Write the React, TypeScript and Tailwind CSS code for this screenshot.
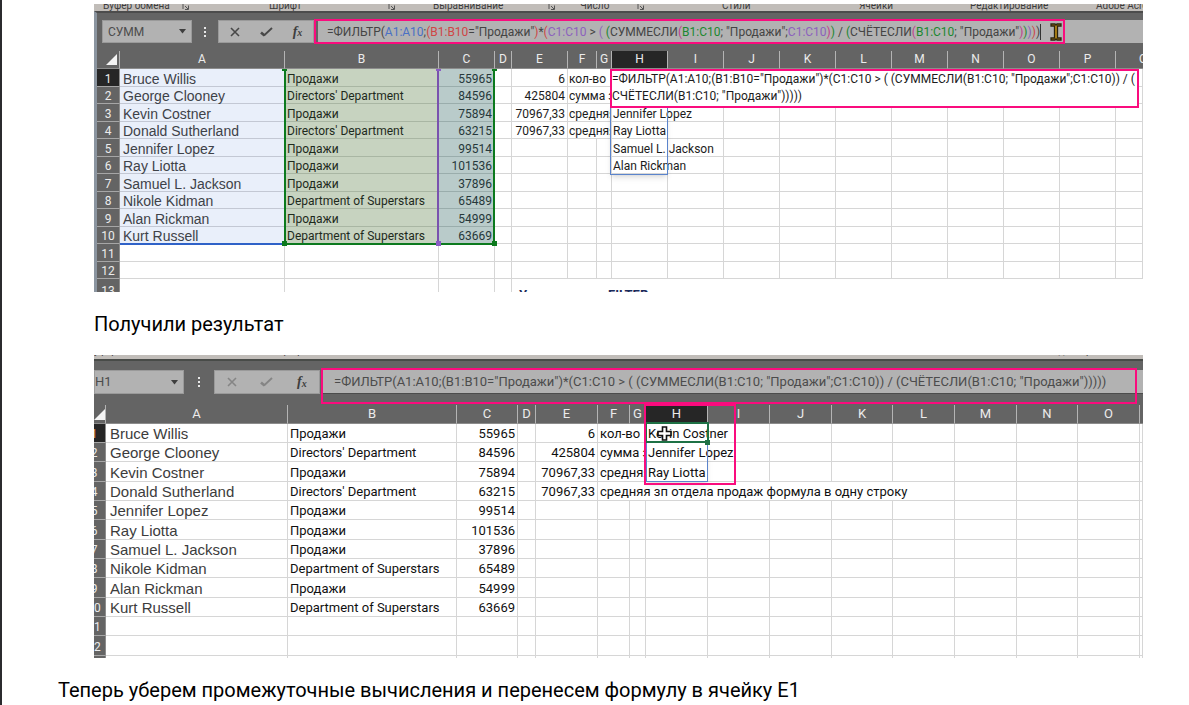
import React from "react";

const people: [string, string, string][] = [
  ["Bruce Willis", "Продажи", "55965"],
  ["George Clooney", "Directors' Department", "84596"],
  ["Kevin Costner", "Продажи", "75894"],
  ["Donald Sutherland", "Directors' Department", "63215"],
  ["Jennifer Lopez", "Продажи", "99514"],
  ["Ray Liotta", "Продажи", "101536"],
  ["Samuel L. Jackson", "Продажи", "37896"],
  ["Nikole Kidman", "Department of Superstars", "65489"],
  ["Alan Rickman", "Продажи", "54999"],
  ["Kurt Russell", "Department of Superstars", "63669"],
];

const totals: [string, string][] = [
  ["6", "кол-во"],
  ["425804", "сумма зп"],
  ["70967,33", "средняя зп"],
  ["70967,33", "средняя зп отдела продаж формула в одну строку"],
];

const formula =
  '=ФИЛЬТР(A1:A10;(B1:B10="Продажи")*(C1:C10 > ( (СУММЕСЛИ(B1:C10; "Продажи";C1:C10)) / (СЧЁТЕСЛИ(B1:C10; "Продажи")))))';
const cellFormula = formula.replace("/ (", "/ (\n");

const tokens: [string, string][] = [
  ["=ФИЛЬТР(", ""],
  ["A1:A10", "text-[#4a70c4]"],
  [";", ""],
  ["(B1:B10", "text-[#cf4646]"],
  ['="Продажи"', ""],
  [")", "text-[#cf4646]"],
  ["*", ""],
  ["(", "text-[#cf4646]"],
  ["C1:C10", "text-[#8c62bd]"],
  [" > ", ""],
  ["( ", "text-[#8c62bd]"],
  ["(", "text-[#1c8830]"],
  ["СУММЕСЛИ", ""],
  ["(", "text-[#c0408c]"],
  ["B1:C10", "text-[#1c8830]"],
  ['; "Продажи";', ""],
  ["C1:C10", "text-[#8c62bd]"],
  [")", "text-[#c0408c]"],
  [")", "text-[#1c8830]"],
  [" / ", ""],
  ["(", "text-[#1c8830]"],
  ["СЧЁТЕСЛИ", ""],
  ["(", "text-[#c0408c]"],
  ["B1:C10", "text-[#1c8830]"],
  ['; "Продажи"', ""],
  [")", "text-[#c0408c]"],
  [")", "text-[#1c8830]"],
  [")", "text-[#8c62bd]"],
  [")", "text-[#cf4646]"],
  [")", ""],
];

const grid = "border-r border-b border-[#d6d6d6] p-0";
const rowHead =
  "border-r border-b border-r-[#8c8c8c] border-b-[#a6a6a6] p-0 text-center font-normal text-[#ececec]";
const colHead = "border-r border-b border-r-[#b4b4b4] border-b-[#8c8c8c] p-0 text-center font-normal text-[#ececec]";

function Launcher() {
  return (
    <svg className="h-[7px] w-[8px]" viewBox="0 0 8 7" fill="none" stroke="#555">
      <path d="M1 0v5M3 2l3 3M3 5.500h3.500v-4" />
    </svg>
  );
}

function Dots() {
  return (
    <svg className="h-3 w-1" viewBox="0 0 4 12" fill="#e8e8e8">
      <path d="M1 1h2v2H1zM1 5h2v2H1zM1 9h2v2H1z" />
    </svg>
  );
}

function NameBox({ label, value, inputClass }: { label: string; value: string; inputClass: string }) {
  return (
    <div className="flex h-full w-[90px] shrink-0 items-center border border-[#9a9a9a] bg-[#b2b2b2]">
      <input
        aria-label={label}
        defaultValue={value}
        className={`min-w-0 flex-1 bg-transparent text-[#4c4c4c] outline-none ${inputClass}`}
      />
      <button aria-label="Список имён" className="flex h-full w-[18px] items-center justify-center">
        <svg className="h-[5px] w-[7px]" viewBox="0 0 7 5" fill="#3e3e3e">
          <path d="M0 0h7L3.500 4.500z" />
        </svg>
      </button>
    </div>
  );
}

function FormulaButtons({ muted }: { muted?: boolean }) {
  const tone = muted ? "#858585" : "#484848";
  return (
    <div className="flex h-full shrink-0 items-center border border-[#9a9a9a] bg-[#b2b2b2]">
      <button aria-label="Отмена" className="flex h-full w-[31px] items-center justify-center">
        <svg className="h-[10px] w-[10px]" viewBox="0 0 10 10" fill="none" stroke={tone} strokeWidth="1.600">
          <path d="M1 1l8 8M9 1L1 9" />
        </svg>
      </button>
      <button aria-label="Ввод" className="flex h-full w-8 items-center justify-center">
        <svg className="h-[10px] w-[13px]" viewBox="0 0 13 10" fill="none" stroke={tone}>
          <path d="M1 5.500l3.500 3" strokeWidth="2.600" />
          <path d="M4 8.500L12 1" strokeWidth="1.800" />
        </svg>
      </button>
      <button
        aria-label="Вставить функцию"
        className="flex h-full w-[31px] items-center justify-center font-['Liberation_Serif',serif] text-sm font-bold text-[#3e3e3e] italic"
      >
        f<span className="pt-1 text-[10px]">x</span>
      </button>
    </div>
  );
}

function ColumnHeads({ letters, active, className, children }: {
  letters: string;
  active: string;
  className: string;
  children: React.ReactNode;
}) {
  return (
    <thead>
      <tr className={`bg-[#646464] ${className}`}>
        <th className="border-r border-b border-r-[#b4b4b4] border-b-[#8c8c8c] p-0">
          <svg className="mr-[2px] ml-auto h-[11px] w-[11px]" viewBox="0 0 11 11" fill="#f4f4f4">
            <path d="M11 0v11H0z" />
          </svg>
        </th>
        {letters.split("").map((l) => (
          <th key={l} className={`${colHead} ${l === active ? "bg-[#262626]" : ""}`}>
            {l}
          </th>
        ))}
        {children}
      </tr>
    </thead>
  );
}

function Blank({ n }: { n: number }) {
  return (
    <>
      {Array.from({ length: n }, (_, i) => (
        <td key={i} className={grid} />
      ))}
    </>
  );
}

function EditingSheet() {
  const spill = ["", "", "Jennifer Lopez", "Ray Liotta", "Samuel L. Jackson", "Alan Rickman"];
  const row = "leading-[14px] odd:h-[18px] even:h-[17px] [&>*]:pt-[2px]";
  return (
    <section className="relative mr-[46px] ml-[92px] h-72 overflow-hidden text-xs">
      <div className="flex h-[7px] items-end overflow-hidden bg-[#c1bdb9] pl-[9px] text-[10px] leading-[10px] whitespace-nowrap text-[#3c3c3c]">
        <div className="flex w-[166px] shrink-0 items-end gap-3">Буфер обмена <Launcher /></div>
        <div className="flex w-[164px] shrink-0 items-end"><span className="w-[119px]">Шрифт</span><Launcher /></div>
        <div className="flex w-[147px] shrink-0 items-end"><span className="w-[115px]">Выравнивание</span><Launcher /></div>
        <div className="flex w-[142px] shrink-0 items-end"><span className="w-[57px]">Число</span><Launcher /></div>
        <div className="w-[137px] shrink-0">Стили</div>
        <div className="w-[111px] shrink-0">Ячейки</div>
        <div className="w-[126px] shrink-0">Редактирование</div>
        <div className="shrink-0">Adobe Acrobat</div>
      </div>
      <div className="border-t-2 border-l-[3px] border-t-[#4c4c4c] border-l-[#8b95a0] bg-[#646464] pt-[7px] pb-2 pl-[5px]">
        <div className="flex h-[23px] items-center">
          <NameBox label="Имя ячейки" value="СУММ" inputClass="pl-[5px]" />
          <div className="flex w-[26px] shrink-0 justify-center"><Dots /></div>
          <FormulaButtons />
          <div
            role="textbox"
            aria-label="Строка формул"
            className="ml-1 flex h-full min-w-0 flex-1 items-center bg-[#b2b2b2] pl-[9px] whitespace-pre text-[#444]"
          >
            {tokens.map(([text, tone], i) => (
              <span key={i} className={tone}>{text}</span>
            ))}
            <span className="h-4 w-px bg-[#333]" />
          </div>
        </div>
      </div>
      <table className="w-full table-fixed border-separate border-spacing-0 border-l-[3px] border-[#8b95a0] whitespace-nowrap text-[#1c1c1c]">
        <colgroup>
          <col className="w-[23px]" /><col className="w-[165px]" /><col className="w-[154px]" /><col className="w-[56px]" />
          <col className="w-[17px]" /><col className="w-[56px]" /><col className="w-[29px]" /><col className="w-[15px]" />
          <col className="w-[56px]" /><col className="w-[56px]" /><col className="w-[56px]" /><col className="w-[56px]" />
          <col className="w-[56px]" /><col className="w-[56px]" /><col className="w-[56px]" /><col className="w-[56px]" />
          <col className="w-[56px]" /><col />
        </colgroup>
        <ColumnHeads letters="ABCDEFGHIJKLMNOP" active="H" className="h-[18px] leading-[17px]">
          <th className="border-b border-[#8c8c8c] p-0 pl-[23px] text-left font-normal text-[#ececec]">Q</th>
        </ColumnHeads>
        <tbody>
          {people.map(([name, dept, pay], i) => (
            <tr key={name} className={row}>
              <th className={`${rowHead} ${i === 0 ? "bg-[#262626]" : "bg-[#646464]"}`}>{i + 1}</th>
              <td className="border-b border-[#c3c8d4] bg-[#e9effa] p-0 pl-[3px] font-['Liberation_Sans',sans-serif] text-sm leading-[14px] text-[#3e4248]">{name}</td>
              <td className="border-b border-[#a9b6a3] bg-[#c7d3c0] p-0 pl-[2px] text-[#1e2a1c]">{dept}</td>
              <td className="border-b border-[#9aadac] bg-[#b9cbca] p-0 pr-[3px] text-right text-[#26383a]">{pay}</td>
              <td className={grid} />
              {i < 4 ? (
                <>
                  <td className={`${grid} pr-[2px] text-right`}>{totals[i][0]}</td>
                  <td colSpan={2} className={`${grid} overflow-hidden pl-px`}>{totals[i][1]}</td>
                </>
              ) : (
                <Blank n={3} />
              )}
              <td className={`${grid} pl-px`}>{spill[i]}</td>
              <Blank n={9} />
            </tr>
          ))}
          {[11, 12].map((n) => (
            <tr key={n} className={row}>
              <th className={`${rowHead} bg-[#646464]`}>{n}</th>
              <Blank n={17} />
            </tr>
          ))}
          <tr className="h-[18px] leading-4">
            <th className={`${rowHead} bg-[#646464]`}>13</th>
            <Blank n={4} />
            <td colSpan={13} className="p-0 pt-2 pl-[7px] align-top text-[13px] font-bold text-[#1b2a5a]">
              <span className="inline-block w-[89px]">У</span>FILTER
            </td>
          </tr>
        </tbody>
      </table>

      {/* Referenced ranges */}
      <div className="absolute top-[65px] left-[26px] h-[176px] w-[165px] border-b-2 border-[#2f62c8]" />
      <div className="absolute top-[65px] left-[190px] h-[176px] w-[211px] border-2 border-t-0 border-[#0c7a1e]" />
      <div className="absolute top-[65px] left-[343px] h-[174px] w-[2px] bg-[#7a52ae]" />
      <div className="absolute top-[237px] left-[188px] size-[5px] bg-[#0c7a1e]" />
      <div className="absolute top-[237px] left-[342px] size-[5px] bg-[#8a5cc4]" />
      <div className="absolute top-[237px] left-[398px] size-[5px] bg-[#0c7a1e]" />
      <div className="absolute top-[65px] left-[188px] h-[2px] w-[5px] bg-[#0c7a1e]" />
      <div className="absolute top-[65px] left-[342px] h-[2px] w-[5px] bg-[#8a5cc4]" />
      <div className="absolute top-[65px] left-[398px] h-[2px] w-[5px] bg-[#0c7a1e]" />
      <div className="absolute top-[100px] left-[516px] h-[71px] w-[58px] border border-[#5b84cc] shadow-md" />

      {/* In-cell editor */}
      <textarea
        aria-label="Формула ячейки H1"
        defaultValue={cellFormula}
        className="absolute top-[65px] left-[516px] h-[39px] w-[529px] resize-none overflow-hidden border-2 border-[#fa0c7e] bg-white leading-[17px] whitespace-pre text-[#1c1c1c] outline-none"
      />
      <div className="absolute top-[15px] left-[220px] h-[25px] w-[751px] border-2 border-[#fa0c7e]" />
      <svg className="absolute top-[19px] left-[956px] h-[18px] w-[12px]" viewBox="0 0 12 18">
        <path d="M1 1h4l1 1 1-1h4v2H7.500v12H11v2H7l-1-1-1 1H1v-2h3.500V3H1z" fill="#b88a18" stroke="#2c2410" strokeWidth="1.300" />
      </svg>
    </section>
  );
}

function ResultSheet() {
  const spill = ["Kevin Costner", "Jennifer Lopez", "Ray Liotta"];
  const row = "h-[19px] leading-[16px] nth-[3n]:h-[20px] [&>*]:pt-[2px]";
  return (
    <section className="relative mr-[46px] ml-[92px] h-[303px] overflow-hidden text-[13px]">
      <div className="flex h-1 items-end overflow-hidden bg-[#c1bdb9] pb-[2px] text-[10px] leading-3 whitespace-nowrap text-[#3c3c3c]">
        <span className="w-[180px] shrink-0">уфер обмена</span>
        <span className="w-[773px] shrink-0">Шрифт</span>
        <span className="shrink-0">Редактирование</span>
      </div>
      <div className="border-t-2 border-[#484b48] bg-[#646464] pt-[9px] pb-[11px]">
        <div className="flex h-6 items-center">
          <NameBox label="Имя ячейки" value="H1" inputClass="" />
          <div className="flex w-[30px] shrink-0 justify-center"><Dots /></div>
          <div className="h-full w-[106px] shrink-0 [&>div]:justify-around">
            <FormulaButtons muted />
          </div>
          <input
            aria-label="Строка формул"
            defaultValue={formula}
            className="ml-[2px] h-full min-w-0 flex-1 border-b border-[#4c4c4c] bg-[#b2b2b2] pl-3 text-[#4c4c4c] outline-none"
          />
        </div>
      </div>
      <table className="w-full table-fixed border-separate border-spacing-0 whitespace-nowrap text-[#101010]">
        <colgroup>
          <col className="w-[12px]" /><col className="w-[182px]" /><col className="w-[169px]" /><col className="w-[61px]" />
          <col className="w-[18px]" /><col className="w-[62px]" /><col className="w-[32px]" /><col className="w-[16px]" />
          <col className="w-[62px]" /><col className="w-[62px]" /><col className="w-[62px]" /><col className="w-[61px]" />
          <col className="w-[62px]" /><col className="w-[62px]" /><col className="w-[61px]" /><col className="w-[62px]" />
          <col />
        </colgroup>
        <ColumnHeads letters="ABCDEFGHIJKLMNO" active="H" className="h-[19px] leading-[18px]">
          <th className="border-b border-[#8c8c8c] p-0" />
        </ColumnHeads>
        <tbody>
          {people.map(([name, dept, pay], i) => (
            <tr key={name} className={row}>
              <th className={`${rowHead} ${i === 0 ? "bg-[#262626]" : "bg-[#646464]"}`}>
                <span className={`flex w-0 justify-center text-xs leading-[16px] ${i === 0 ? "text-[#f0a050]" : ""}`}>
                  {i + 1}
                </span>
              </th>
              <td className={`${grid} pl-1 font-['Liberation_Sans',sans-serif] text-[15px] leading-[16px] text-[#3c3c3c]`}>{name}</td>
              <td className={`${grid} pl-[2px]`}>{dept}</td>
              <td className={`${grid} pr-[2px] text-right`}>{pay}</td>
              <td className={grid} />
              {i < 4 ? (
                <>
                  <td className={`${grid} pr-[2px] text-right`}>{totals[i][0]}</td>
                  <td colSpan={i === 3 ? 7 : 2} className={`${grid} overflow-hidden pl-[2px]`}>{totals[i][1]}</td>
                  {i < 3 && (
                    <>
                      <td className={`${grid} pl-[2px]`}>{spill[i]}</td>
                      <Blank n={4} />
                    </>
                  )}
                  <Blank n={4} />
                </>
              ) : (
                <Blank n={12} />
              )}
            </tr>
          ))}
          {[11, 12, 13].map((n) => (
            <tr key={n} className={row}>
              <th className={`${rowHead} bg-[#646464]`}>
                <span className="flex w-0 justify-center text-xs leading-[16px]">{n}</span>
              </th>
              <Blank n={16} />
            </tr>
          ))}
        </tbody>
      </table>

      {/* Spill range, selected cell and highlights */}
      <div className="absolute top-[86px] left-[552px] h-[41px] w-[62px] border border-t-0 border-[#5b84cc] shadow-md" />
      <div className="absolute top-[67px] left-[551px] h-[21px] w-[64px] border-2 border-[#1e7145]" />
      <div className="absolute top-[85px] left-[611px] size-[5px] bg-[#1e7145]" />
      <div className="absolute top-[13px] left-[227px] h-[36px] w-[816px] border-2 border-[#fa0c7e]" />
      <div className="absolute top-[49px] left-[550px] h-[81px] w-[92px] border-2 border-[#fa0c7e]" />
      <svg className="absolute top-[71px] left-[563px] h-[15px] w-[15px]" viewBox="0 0 15 15">
        <path d="M5.500 1h4v4.500H14v4H9.500V14h-4V9.500H1v-4h4.500z" fill="#fff" stroke="#111" strokeWidth="1.600" />
      </svg>
    </section>
  );
}

export default function App() {
  return (
    <main className="min-h-screen overflow-hidden border-l-2 border-[#2b2b2e] bg-white pt-1 font-['Roboto','Noto_Sans',sans-serif] text-black">
      <EditingSheet />
      <p className="ml-[92px] pt-[2px] text-xl leading-[61px]">Получили результат</p>
      <ResultSheet />
      <p className="ml-[56px] pt-[17px] text-xl leading-[30px]">
        Теперь уберем промежуточные вычисления и перенесем формулу в ячейку E1
      </p>
    </main>
  );
}
